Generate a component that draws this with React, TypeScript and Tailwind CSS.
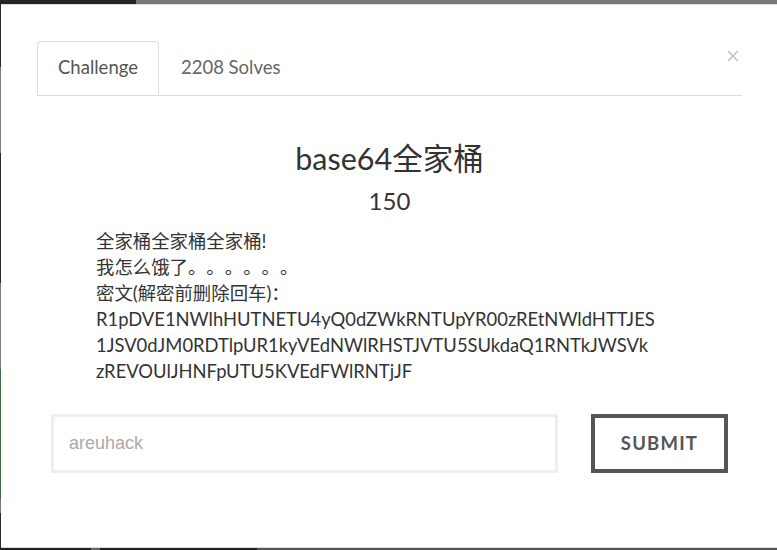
import React from "react";

const lato = "font-['Lato','Noto_Sans_CJK_SC',sans-serif]";

const ChallengeModal = () => {
  return (
    <div className="flex-1 bg-white border-y border-[#dcdcdc] pt-[36px] pl-[36px] pr-[35px]">
      <div className="relative">
        <ul className="flex border-b border-[#ddd]">
          <li className="-mb-px h-[54px] px-[20px] flex items-center border border-[#ddd] border-b-white rounded-t-[4px] bg-white text-[18.5px] text-[#555]">
            Challenge
          </li>
          <li className="h-[54px] px-[22px] flex items-center text-[18.5px] text-[#666]">
            2208 Solves
          </li>
        </ul>
        <button className="absolute right-[2px] top-[8px] w-[14px] h-[14px]" aria-label="Close">
          <svg viewBox="0 0 14 14" className="w-[14px] h-[14px]">
            <path d="M2 2L12 12M12 2L2 12" stroke="#c4c4c4" strokeWidth="1.6" />
          </svg>
        </button>
      </div>

      <h2 className="mt-[44px] text-center text-[30.5px] leading-[36px] text-[#333]">base64全家桶</h2>
      <h4 className="mt-[10px] text-center text-[24px] leading-[30px] text-[#333]">150</h4>

      <div className="mt-[12px] ml-[59px] text-[18.4px] leading-[26px] text-[#333] [text-spacing-trim:space-all]">
        <p>全家桶全家桶全家桶!</p>
        <p>我怎么饿了。。。。。。</p>
        <p>密文(解密前删除回车)：</p>
        <p>R1pDVE1NWlhHUTNETU4yQ0dZWkRNTUpYR00zREtNWldHTTJES</p>
        <p>1JSV0dJM0RDTlpUR1kyVEdNWlRHSTJVTU5SUkdaQ1RNTkJWSVk</p>
        <p>zREVOUlJHNFpUTU5KVEdFWlRNTjJF</p>
      </div>

      <form className="mt-[30px] flex gap-[33px] px-[14px]" onSubmit={(e) => e.preventDefault()}>
        <input
          className="flex-1 h-[59px] border-[3px] border-[#eee] px-[15px] text-[18px] font-['Liberation_Sans',sans-serif] text-[#333] placeholder:text-[#aaa] outline-none"
          placeholder="areuhack"
        />
        <button className="w-[137px] h-[59px] border-[4px] border-[#555] text-[18.5px] font-bold tracking-[1.2px] text-[#555]">
          SUBMIT
        </button>
      </form>
    </div>
  );
};

export default function App() {
  return (
    <div className={`w-[777px] h-[550px] flex flex-col bg-[#222] overflow-hidden ${lato}`}>
      <div className="h-[4px] flex shrink-0">
        <div className="w-[136px] bg-[#242424]" />
        <div className="flex-1 bg-[#777]" />
      </div>
      <div className="flex-1 flex min-h-0">
        <div className="w-[1px] flex flex-col">
          <div className="h-[63px] bg-[#2a2a2a]" />
          <div className="h-[86px] bg-[#7a7a7a]" />
          <div className="h-[130px] bg-[#2a2a2a]" />
          <div className="h-[86px] bg-[#7a7a7a]" />
          <div className="h-[130px] bg-[#3c6b44]" />
          <div className="h-[14px] bg-[#7a7a7a]" />
          <div className="flex-1 bg-[#2a2a2a]" />
        </div>
        <ChallengeModal />
      </div>
      <div className="h-[2px] flex shrink-0">
        <div className="w-[91px] bg-[#222]" />
        <div className="w-[9px] bg-[#666]" />
        <div className="w-[157px] bg-[#222]" />
        <div className="flex-1 bg-[#555]" />
      </div>
    </div>
  );
}
